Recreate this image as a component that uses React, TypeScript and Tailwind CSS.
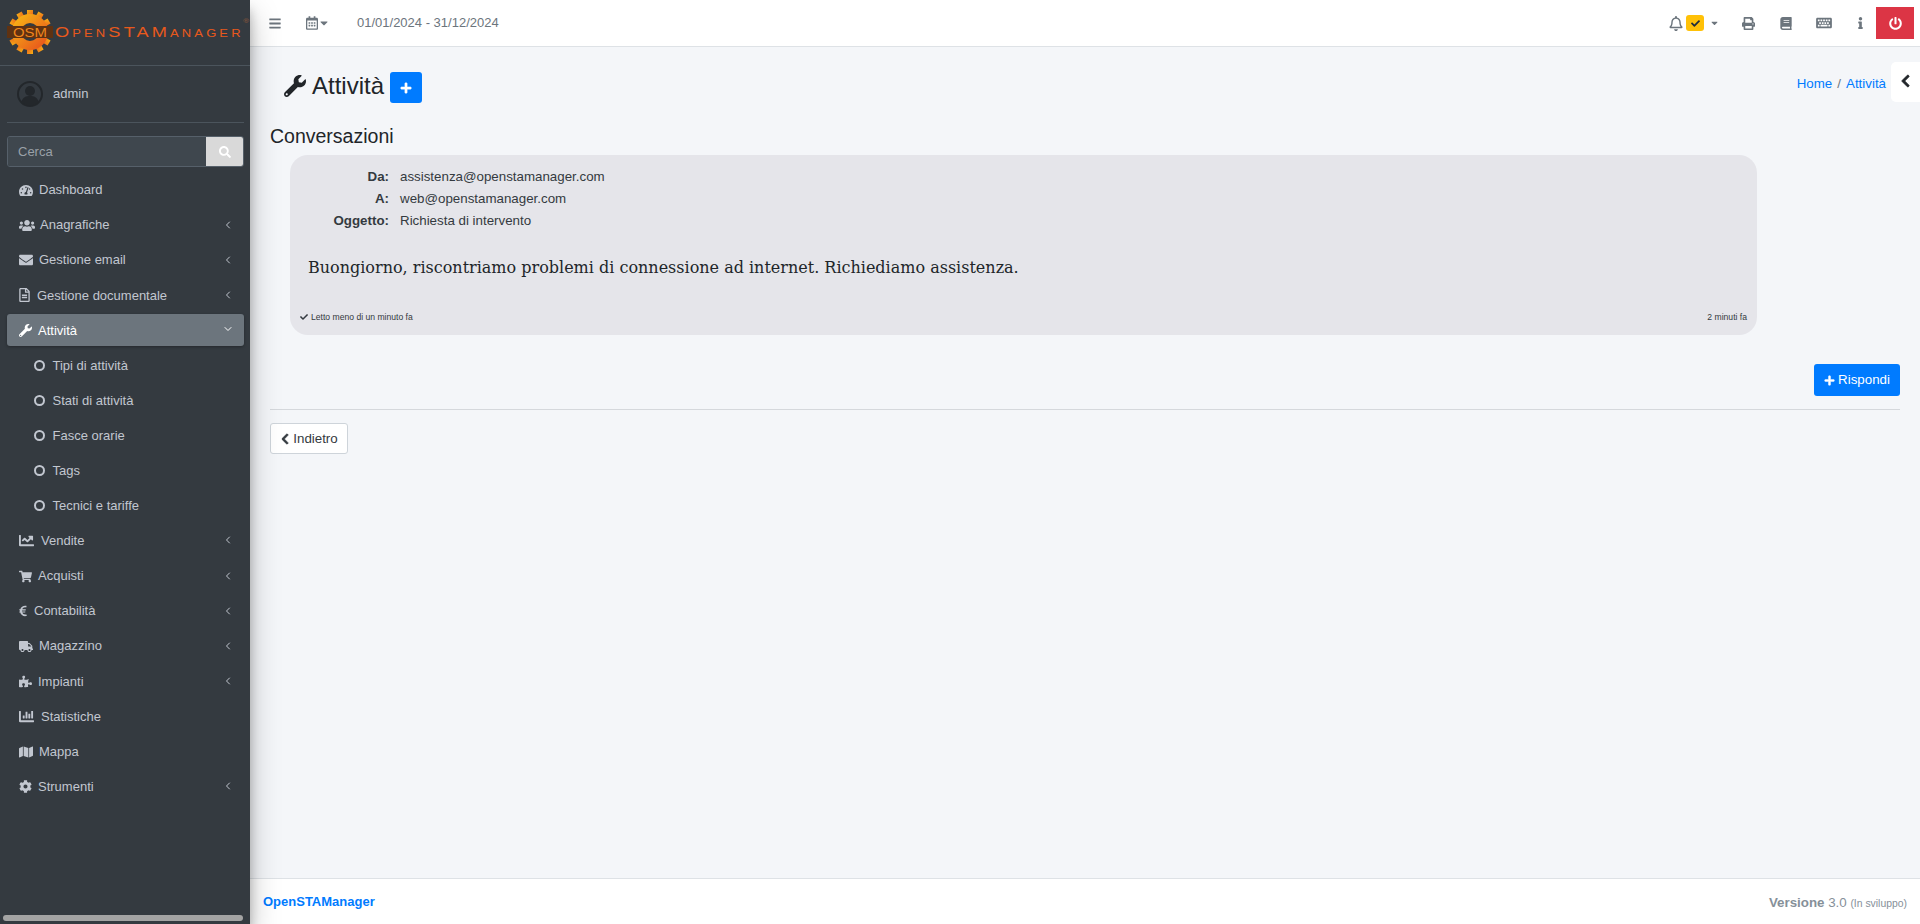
import {
  FaBars,
  FaBook,
  FaCaretDown,
  FaChartBar,
  FaChartLine,
  FaCheck,
  FaChevronLeft,
  FaCog,
  FaEnvelope,
  FaEuroSign,
  FaInfo,
  FaKeyboard,
  FaMap,
  FaPlus,
  FaPowerOff,
  FaPrint,
  FaPuzzlePiece,
  FaRegBell,
  FaRegCalendarAlt,
  FaRegFileAlt,
  FaSearch,
  FaShoppingCart,
  FaTachometerAlt,
  FaTruck,
  FaUsers,
  FaWrench,
} from 'react-icons/fa';
import { ChevronDown, ChevronLeft } from 'lucide-react';
import type { ComponentType } from 'react';

type IconType = ComponentType<{ className?: string }>;

interface MenuItem {
  label: string;
  icon: IconType;
  // icon size, and the box that sets where the label starts
  size: string;
  box: string;
  arrow?: boolean;
}

const topItems: MenuItem[] = [
  { label: 'Dashboard', icon: FaTachometerAlt, size: 'h-[13px] w-[14px]', box: 'w-[20px]' },
  { label: 'Anagrafiche', icon: FaUsers, size: 'h-[13px] w-[16px]', box: 'w-[21px]', arrow: true },
  { label: 'Gestione email', icon: FaEnvelope, size: 'h-[14px] w-[14px]', box: 'w-[20px]', arrow: true },
  { label: 'Gestione documentale', icon: FaRegFileAlt, size: 'h-[14px] w-[11px]', box: 'w-[18px]', arrow: true },
];

const subItems = ['Tipi di attività', 'Stati di attività', 'Fasce orarie', 'Tags', 'Tecnici e tariffe'];

const bottomItems: MenuItem[] = [
  { label: 'Vendite', icon: FaChartLine, size: 'h-[15px] w-[15px]', box: 'w-[22px]', arrow: true },
  { label: 'Acquisti', icon: FaShoppingCart, size: 'h-[13px] w-[13px]', box: 'w-[19px]', arrow: true },
  { label: 'Contabilità', icon: FaEuroSign, size: 'h-[12px] w-[8px]', box: 'w-[15px]', arrow: true },
  { label: 'Magazzino', icon: FaTruck, size: 'h-[13px] w-[14px]', box: 'w-[20px]', arrow: true },
  { label: 'Impianti', icon: FaPuzzlePiece, size: 'h-[13px] w-[13px]', box: 'w-[19px]', arrow: true },
  { label: 'Statistiche', icon: FaChartBar, size: 'h-[15px] w-[15px]', box: 'w-[22px]' },
  { label: 'Mappa', icon: FaMap, size: 'h-[14px] w-[14px]', box: 'w-[20px]' },
  { label: 'Strumenti', icon: FaCog, size: 'h-[13px] w-[13px]', box: 'w-[19px]', arrow: true },
];

function GearLogo() {
  const teeth = Array.from({ length: 12 }, (_, i) => i * 30);
  return (
    <svg viewBox="0 0 46 46" className="h-[46px] w-[46px] shrink-0">
      <defs>
        <linearGradient id="gear" x1="0" y1="0" x2="1" y2="1">
          <stop offset="0" stopColor="#f7b015" />
          <stop offset="1" stopColor="#e8591c" />
        </linearGradient>
      </defs>
      {teeth.map((deg) => (
        <rect key={deg} x="20" y="1" width="6" height="8" fill="url(#gear)" transform={`rotate(${deg} 23 23)`} />
      ))}
      <circle cx="23" cy="23" r="13.5" fill="none" stroke="url(#gear)" strokeWidth="9" />
      <rect x="0" y="17" width="46" height="12" fill="#5f3212" />
      <text
        x="6"
        y="27.500"
        textLength="34"
        lengthAdjust="spacingAndGlyphs"
        fontSize="12.500"
        fontFamily="'Liberation Sans', sans-serif"
        fill="#f0861c"
      >
        OSM
      </text>
    </svg>
  );
}

function SidebarRow({ item }: { item: MenuItem }) {
  const Icon = item.icon;
  return (
    <a className="flex h-[32px] items-center pl-[12px] pr-[10px] text-[#c2c7d0]">
      <span className={`${item.box} flex shrink-0 items-center`}>
        <Icon className={item.size} />
      </span>
      <span className="flex-1">{item.label}</span>
      {item.arrow && <ChevronLeft className="mb-[1px] h-[12px] w-[12px]" strokeWidth={2} />}
    </a>
  );
}

function Sidebar() {
  return (
    <aside className="z-10 flex h-[924px] w-[250px] shrink-0 flex-col bg-[#343a40] text-[13px] shadow-[0_14px_28px_rgba(0,0,0,0.25),0_10px_10px_rgba(0,0,0,0.22)]">
      <div className="flex h-[66px] items-center border-b border-[#4b545c] pb-[1px] pl-[7px]">
        <GearLogo />
        <span className="relative ml-[2px] mt-[1px] origin-left whitespace-nowrap text-[14px] tracking-[2.4px] text-[#e8591c] [font-variant:small-caps] [transform:scaleX(1.3)]">
          OpenSTAManager
          <sup className="absolute right-[-4px] top-[-1px] text-[6px] tracking-normal text-[#9a5a3a]">®</sup>
        </span>
      </div>

      <div className="pl-[7px] pr-[6px]">
        <div className="flex h-[57px] items-center gap-[10px] border-b border-[#4b545c] pl-[10px]">
          <svg viewBox="0 0 26 26" className="h-[26px] w-[26px]">
            <circle cx="13" cy="13" r="12" fill="#343a40" stroke="#23272b" strokeWidth="2" />
            <circle cx="13" cy="10" r="5" fill="#23272b" />
            <path d="M4.5 21c1-5 4.500-6 8.500-6s7.500 1 8.500 6a12 12 0 0 1-17 0z" fill="#23272b" />
          </svg>
          <span className="text-[#c2c7d0]">admin</span>
        </div>

        <div className="mt-[13px] flex h-[31px] overflow-hidden rounded-[3px] border border-[#56606a]">
          <div className="flex flex-1 items-center bg-[#3f474e] pl-[10px] pt-[1px] text-[#9aa1a8]">Cerca</div>
          <div className="flex w-[37px] items-center justify-center bg-[#d9d9d9] text-white">
            <FaSearch className="h-[12px] w-[12px]" />
          </div>
        </div>

        <nav className="mt-[7px] flex flex-col gap-[3.1px]">
          {topItems.map((item) => (
            <SidebarRow key={item.label} item={item} />
          ))}
          <a className="flex h-[32px] items-center rounded-[3px] bg-[#6c757d] pl-[12px] pr-[10px] text-white shadow-[0_1px_3px_rgba(0,0,0,0.3)]">
            <span className="w-[19px] shrink-0">
              <FaWrench className="h-[13px] w-[13px]" />
            </span>
            <span className="flex-1">Attività</span>
            <ChevronDown className="mb-[3px] h-[12px] w-[12px]" strokeWidth={2} />
          </a>
          {subItems.map((label) => (
            <a key={label} className="flex h-[32px] items-center pl-[27px] text-[#c2c7d0]">
              <span className="h-[11px] w-[11px] rounded-full border-2 border-[#c2c7d0]" />
              <span className="ml-[7.5px]">{label}</span>
            </a>
          ))}
          {bottomItems.map((item) => (
            <SidebarRow key={item.label} item={item} />
          ))}
        </nav>
      </div>

      <div className="mt-auto px-[3px] pb-[3px]">
        <div className="h-[6px] w-[240px] rounded-full bg-[#a3a3a3]" />
      </div>
    </aside>
  );
}

function Topbar() {
  return (
    <header className="flex h-[47px] shrink-0 items-center border-b border-[#dee2e6] bg-white text-[#6c757d]">
      <FaBars className="ml-[19px] h-[13px] w-[12px]" />
      <FaRegCalendarAlt className="ml-[25px] h-[14px] w-[12px]" />
      <FaCaretDown className="ml-[1px] h-[12px] w-[10px]" />
      <span className="ml-[28px] text-[13px]">01/01/2024 - 31/12/2024</span>

      <div className="ml-auto flex items-center pr-[6px]">
        <FaRegBell className="mr-[1px] h-[15px] w-[14px]" />
        <span className="ml-[2px] flex h-[16px] w-[18px] items-center justify-center rounded-[3px] bg-[#ffc107] text-[#1f2d3d]">
          <FaCheck className="h-[9px] w-[9px]" />
        </span>
        <FaCaretDown className="ml-[6px] h-[10px] w-[9px]" />
        <FaPrint className="ml-[23px] h-[13px] w-[13px]" />
        <FaBook className="ml-[25px] h-[13px] w-[12px]" />
        <FaKeyboard className="ml-[24px] h-[14px] w-[16px]" />
        <FaInfo className="ml-[26px] h-[12px] w-[5px]" />
        <button className="ml-[13px] flex h-[32px] w-[38px] items-center justify-center bg-[#dc3545] text-white">
          <FaPowerOff className="h-[13px] w-[13px]" />
        </button>
      </div>
    </header>
  );
}

function MailCard() {
  return (
    <div className="ml-[20px] mt-[7px] flex h-[180px] w-[1467px] flex-col rounded-[18px] bg-[#e5e5ea] text-[#343a40]">
      <div className="mt-[11px] grid grid-cols-[99px_1fr] gap-x-[11px] text-[13.33px] leading-[22px]">
        <b className="text-right">Da:</b>
        <span>assistenza@openstamanager.com</span>
        <b className="text-right">A:</b>
        <span>web@openstamanager.com</span>
        <b className="text-right">Oggetto:</b>
        <span>Richiesta di intervento</span>
      </div>
      <p className="ml-[18px] mt-[24px] text-[16px] leading-[24px] text-[#212529] [font-family:'DejaVu_Serif',serif]">
        Buongiorno, riscontriamo problemi di connessione ad internet. Richiediamo assistenza.
      </p>
      <div className="mx-[10px] mt-auto mb-[12px] flex items-center justify-between text-[8.6px] leading-[12px]">
        <span className="flex items-center gap-[3px]">
          <FaCheck className="h-[8px] w-[8px]" />
          Letto meno di un minuto fa
        </span>
        <span>2 minuti fa</span>
      </div>
    </div>
  );
}

function Content() {
  return (
    <main className="relative flex-1 bg-[#f4f6f9] px-[20px] text-[#212529]">
      <div className="flex h-[69px] items-center pl-[14px] pt-[8px]">
        <FaWrench className="h-[22px] w-[22px]" />
        <h1 className="ml-[6px] text-[24px] leading-[30px]">Attività</h1>
        <button className="ml-[6px] mt-[4px] flex h-[31px] w-[32px] items-center justify-center rounded-[3px] bg-[#007bff] text-white">
          <FaPlus className="h-[12px] w-[12px] stroke-[20]" />
        </button>
        <div className="ml-auto mr-[14px] flex items-center pb-[4px] text-[13.33px] text-[#007bff]">
          <a>Home</a>
          <span className="mx-[5px] text-[#6c757d]">/</span>
          <a>Attività</a>
        </div>
      </div>

      <h3 className="mt-[8px] text-[19.5px] leading-[24px]">Conversazioni</h3>
      <MailCard />

      <div className="mt-[29px] flex justify-end">
        <button className="flex h-[32px] w-[86px] items-center justify-center gap-[3px] rounded-[3px] bg-[#007bff] text-[13.33px] text-white">
          <FaPlus className="h-[11px] w-[11px] stroke-[20]" />
          Rispondi
        </button>
      </div>
      <hr className="mt-[13px] border-[#d5d8dc]" />
      <button className="mt-[13px] flex h-[31px] w-[78px] items-center justify-center gap-[3px] rounded-[3px] border border-[#ced4da] bg-white text-[13.33px] text-[#343a40]">
        <FaChevronLeft className="h-[12px] w-[10px] stroke-[30]" />
        Indietro
      </button>

      <div className="absolute right-0 top-[15px] flex h-[40px] w-[29px] items-center justify-center rounded-l-[5px] bg-white pb-[2px] text-[#212529]">
        <FaChevronLeft className="h-[14px] w-[11px] stroke-[30]" />
      </div>
    </main>
  );
}

export default function App() {
  return (
    <div className="flex h-[924px] w-[1920px] overflow-hidden text-[#212529] [font-family:'Liberation_Sans',Arial,sans-serif]">
      <Sidebar />
      <div className="flex min-w-0 flex-1 flex-col">
        <Topbar />
        <Content />
        <footer className="flex h-[46px] shrink-0 items-center justify-between border-t border-[#dee2e6] bg-white px-[13px] text-[13px]">
          <b className="text-[#007bff]">OpenSTAManager</b>
          <span className="pt-[2px] text-[13.33px] text-[#869099]">
            <b>Versione</b> 3.0 <small className="text-[10.4px]">(In sviluppo)</small>
          </span>
        </footer>
      </div>
    </div>
  );
}
